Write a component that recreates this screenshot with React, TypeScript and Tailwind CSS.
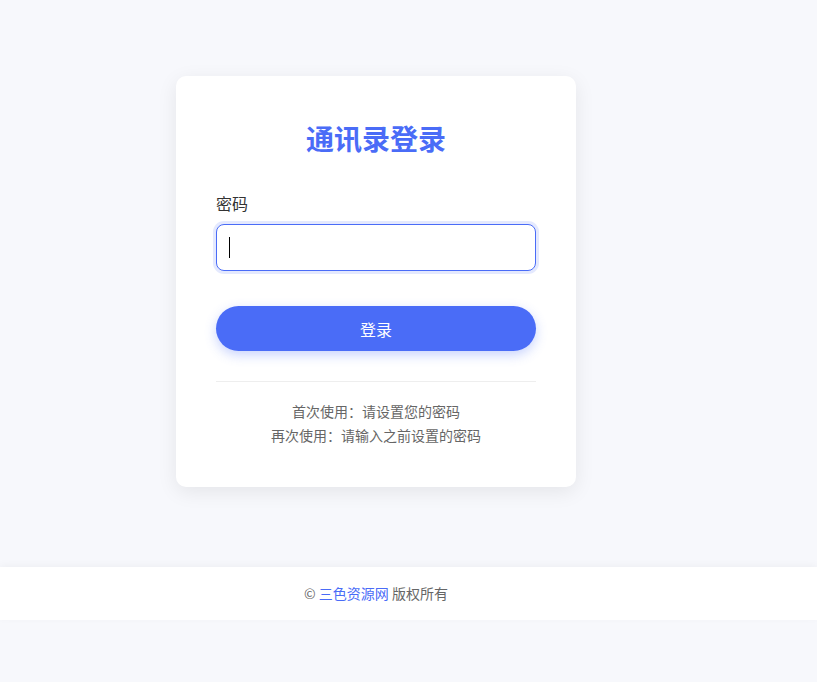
export default function App() {
    return (
        <div
            className="min-h-screen bg-[#f7f8fc] text-[#333]"
            style={{ fontFamily: '"Noto Sans CJK SC", "Noto Sans", sans-serif' }}
        >
            <main className="w-[752px] flex justify-center pt-[76px] pb-[80px]">
                <div className="w-[400px] bg-white rounded-[10px] p-10 shadow-[0_5px_20px_rgba(0,0,0,0.08)]">
                    <h1 className="text-[28px] leading-[44px] font-bold text-center text-[#4a6cf7]">通讯录登录</h1>

                    <label className="block mt-[31px] text-base leading-6 text-[#333]">密码</label>
                    <div className="relative mt-[9px]">
                        <input
                            type="password"
                            className="block w-full h-[47px] px-3 rounded-lg border border-[#4a6cf7] bg-white text-base outline-none ring-[3px] ring-[#4a6cf7]/15"
                        />
                        {/* text caret of the focused field */}
                        <span className="absolute left-[13px] top-[13px] h-[21px] w-px bg-black" />
                    </div>

                    <button className="mt-[35px] w-full h-[45px] rounded-full bg-[#4a6cf7] text-white text-base shadow-[0_4px_12px_rgba(74,108,247,0.3)]">
                        登录
                    </button>

                    <div className="mt-[30px] border-t border-[#eee]" />

                    <div className="mt-[17px] text-center text-sm leading-6 text-[#666]">
                        <p>首次使用：请设置您的密码</p>
                        <p>再次使用：请输入之前设置的密码</p>
                    </div>
                </div>
            </main>

            <footer className="bg-white shadow-[0_-2px_8px_rgba(0,0,0,0.04)]">
                <div className="w-[752px] py-4 text-center text-sm leading-[21px] text-[#666]">
                    © <a className="text-[#4a6cf7]">三色资源网</a> 版权所有
                </div>
            </footer>
        </div>
    );
}
